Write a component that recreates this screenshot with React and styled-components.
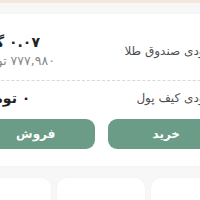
import React from "react";
import styled, { createGlobalStyle } from "styled-components";
import { Calendar, Receipt, History } from "lucide-react";

const GlobalStyle = createGlobalStyle`
  html, body {
    margin: 0;
    padding: 0;
    background: #f7f7f7;
    overflow: hidden;
  }
  body {
    font-family: "DejaVu Sans", "Noto Sans", sans-serif;
  }
`;

const Page = styled.div`
  direction: rtl;
  width: 280px;
  margin-left: -39px;
  display: flex;
  flex-direction: column;
  background: #f7f7f7;
`;

const TopStrip = styled.div`
  height: 3px;
  background: #f3e8db;
`;

const Card = styled.div`
  margin-top: 11px;
  background: #ffffff;
  border-radius: 12px;
  box-shadow: 0 0 2px rgba(0, 0, 0, 0.06);
  padding: 19px 16px 17px;
  display: flex;
  flex-direction: column;
`;

const Row = styled.div`
  display: flex;
  justify-content: space-between;
  align-items: center;
`;

const Label = styled.span`
  font-size: 12px;
  color: #505050;
  white-space: nowrap;
`;

const Values = styled.div`
  display: flex;
  flex-direction: column;
  align-items: flex-end;
  gap: 2px;
`;

const Amount = styled.span`
  font-size: 14px;
  line-height: 18px;
  font-weight: bold;
  color: #222;
  white-space: nowrap;
`;

const Sub = styled.span`
  font-size: 12.5px;
  line-height: 16px;
  color: #888;
  white-space: nowrap;
`;

const Divider = styled.div`
  margin: 11px -16px 8px;
  border-top: 1px dashed #d8d8d8;
`;

const Buttons = styled.div`
  margin-top: 12px;
  display: grid;
  grid-template-columns: 1fr 1fr;
  gap: 13px;
`;

const Button = styled.button`
  height: 30px;
  border: none;
  border-radius: 9px;
  background: #6a9c87;
  color: #ffffff;
  font-family: "DejaVu Sans", sans-serif;
  font-size: 12px;
  font-weight: bold;
`;

const Tiles = styled.div`
  margin-top: 12px;
  padding: 0 3px;
  display: grid;
  grid-template-columns: repeat(3, 1fr);
  gap: 6px;
`;

const Tile = styled.div`
  height: 80px;
  background: #ffffff;
  border-radius: 10px;
  box-shadow: 0 0 2px rgba(0, 0, 0, 0.04);
  display: flex;
  justify-content: center;
  align-items: flex-start;
  padding-top: 22px;
  color: #b8b8b8;
`;

export default function App() {
  return (
    <>
      <GlobalStyle />
      <Page>
        <TopStrip />
        <Card>
          <Row>
            <Label>موجودی صندوق طلا</Label>
            <Values>
              <Amount>۰.۰۷ گرم</Amount>
              <Sub>۷۷۷,۹۸۰ تومان</Sub>
            </Values>
          </Row>
          <Divider />
          <Row>
            <Label>موجودی کیف پول</Label>
            <Amount>۰ تومان</Amount>
          </Row>
          <Buttons>
            <Button>خرید</Button>
            <Button>فروش</Button>
          </Buttons>
        </Card>
        <Tiles>
          <Tile>
            <History size={24} strokeWidth={1.6} />
          </Tile>
          <Tile>
            <Calendar size={24} strokeWidth={1.6} />
          </Tile>
          <Tile>
            <Receipt size={24} strokeWidth={1.6} />
          </Tile>
        </Tiles>
      </Page>
    </>
  );
}
